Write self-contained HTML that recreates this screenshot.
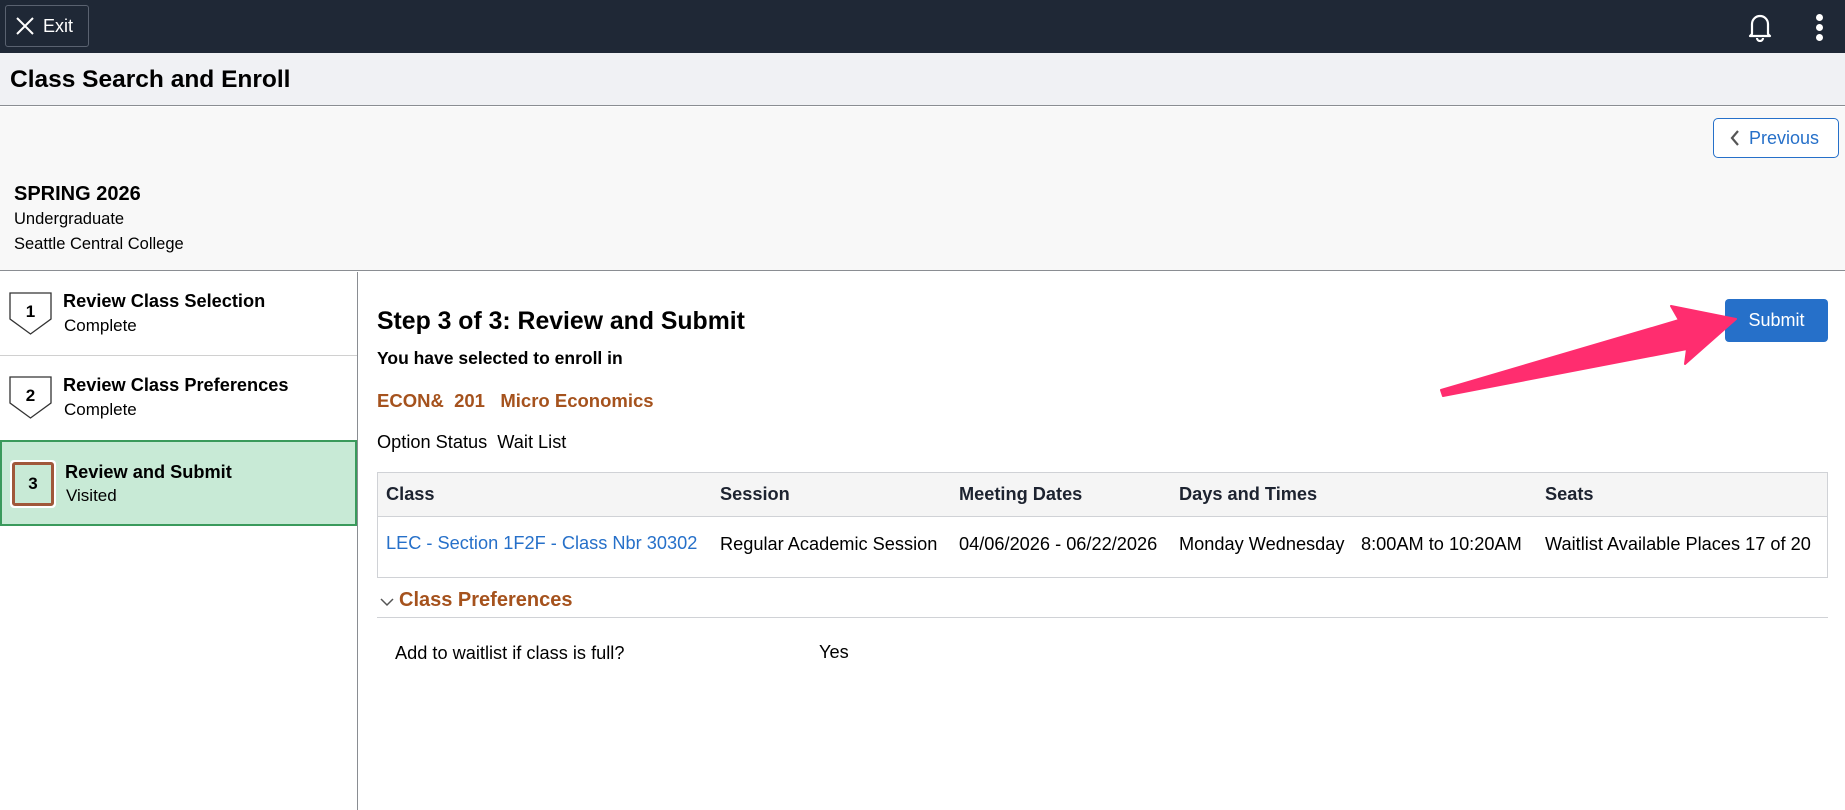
<!DOCTYPE html>
<html><head><meta charset="utf-8"><style>
*{margin:0;padding:0;box-sizing:border-box}
body{width:1845px;height:810px;overflow:hidden;font-family:"Liberation Sans",Arial,sans-serif;background:#fff;color:#000;position:relative}
.a{position:absolute;white-space:nowrap}
.b{font-weight:bold}
</style></head><body>
<div class="a" style="left:0;top:0;width:1845px;height:53px;background:#1f2836"></div>
<div class="a" style="left:5px;top:5px;width:84px;height:42px;border:1px solid #5a6270;border-radius:3px;color:#fff;font-size:18px;line-height:40px;padding-left:37px">Exit</div>
<svg class="a" style="left:15px;top:16px" width="20" height="20" viewBox="0 0 20 20"><path d="M2 2L18 18M18 2L2 18" stroke="#fff" stroke-width="2"/></svg>
<svg class="a" style="left:1747px;top:12px" width="26" height="30" viewBox="0 0 26 30"><path d="M5 22V12a8 8 0 0 1 16 0v10l2 2H3z" fill="none" stroke="#fff" stroke-width="2.2" stroke-linejoin="round"/><path d="M10 26a3 3 0 0 0 6 0" fill="none" stroke="#fff" stroke-width="2.2"/></svg>
<div class="a" style="left:1816px;top:14px;width:7px;height:7px;border-radius:50%;background:#fff"></div>
<div class="a" style="left:1816px;top:24px;width:7px;height:7px;border-radius:50%;background:#fff"></div>
<div class="a" style="left:1816px;top:34px;width:7px;height:7px;border-radius:50%;background:#fff"></div>

<div class="a" style="left:0;top:53px;width:1845px;height:53px;background:#f0f1f4;border-bottom:1px solid #8a8d92"></div>
<div class="a b" style="left:10px;top:66px;font-size:24.5px">Class Search and Enroll</div>
<div class="a" style="left:0;top:107px;width:1845px;height:164px;background:#f8f8f8;border-bottom:1px solid #8a8d92"></div>
<div class="a" style="left:1713px;top:118px;width:126px;height:40px;border:1px solid #2670c9;border-radius:5px;background:#fff;color:#2670c9;font-size:18px;line-height:38px;padding-left:35px">Previous</div>
<svg class="a" style="left:1729px;top:129px" width="12" height="18" viewBox="0 0 12 18"><path d="M9 2L3 9l6 7" fill="none" stroke="#555" stroke-width="2.2"/></svg>
<div class="a b" style="left:14px;top:183px;font-size:20px">SPRING 2026</div>
<div class="a" style="left:14px;top:210px;font-size:16.5px">Undergraduate</div>
<div class="a" style="left:14px;top:235px;font-size:16.5px">Seattle Central College</div>

<div class="a" style="left:357px;top:272px;width:1px;height:538px;background:#8a8d92"></div>
<div class="a" style="left:0;top:355px;width:357px;height:1px;background:#d0d0d0"></div>
<svg class="a" style="left:9px;top:292px" width="44" height="43" viewBox="0 0 44 43"><path d="M1 1H42V27L21.5 42L1 27Z" fill="#fff" stroke="#333" stroke-width="1.3"/><text x="21.5" y="25" font-family="Liberation Sans" font-weight="bold" font-size="17" text-anchor="middle">1</text></svg>
<div class="a b" style="left:63px;top:291px;font-size:18.2px">Review Class Selection</div>
<div class="a" style="left:64px;top:316px;font-size:17px">Complete</div>
<svg class="a" style="left:9px;top:376px" width="44" height="43" viewBox="0 0 44 43"><path d="M1 1H42V27L21.5 42L1 27Z" fill="#fff" stroke="#333" stroke-width="1.3"/><text x="21.5" y="25" font-family="Liberation Sans" font-weight="bold" font-size="17" text-anchor="middle">2</text></svg>
<div class="a b" style="left:63px;top:375px;font-size:18.2px">Review Class Preferences</div>
<div class="a" style="left:64px;top:400px;font-size:17px">Complete</div>
<div class="a" style="left:0;top:440px;width:357px;height:86px;background:#c8ead6;border:2px solid #3a9a5c"></div>
<div class="a" style="left:10px;top:460px;width:46px;height:48px;background:#fff;border-radius:4px"></div>
<div class="a b" style="left:12px;top:462px;width:42px;height:44px;border:3px solid #a0583a;border-radius:3px;background:#c8ead6;font-size:17px;text-align:center;line-height:38px">3</div>
<div class="a b" style="left:65px;top:462px;font-size:18.2px">Review and Submit</div>
<div class="a" style="left:66px;top:486px;font-size:17px">Visited</div>

<div class="a b" style="left:377px;top:308px;font-size:24.8px">Step 3 of 3: Review and Submit</div>
<div class="a b" style="left:377px;top:348px;font-size:17.5px">You have selected to enroll in</div>
<div class="a b" style="left:377px;top:390px;font-size:18.5px;color:#a5521d">ECON&amp;&nbsp; 201&nbsp;&nbsp; Micro Economics</div>
<div class="a" style="left:377px;top:432px;font-size:18.2px">Option Status&nbsp; Wait List</div>

<div class="a" style="left:377px;top:472px;width:1451px;height:106px;border:1px solid #d0d2d6"></div>
<div class="a" style="left:378px;top:473px;width:1449px;height:44px;background:#f5f5f5;border-bottom:1px solid #d0d2d6"></div>
<div class="a b" style="left:386px;top:484px;font-size:18.2px;color:#1d2330">Class</div>
<div class="a b" style="left:720px;top:484px;font-size:18.2px;color:#1d2330">Session</div>
<div class="a b" style="left:959px;top:484px;font-size:18.2px;color:#1d2330">Meeting Dates</div>
<div class="a b" style="left:1179px;top:484px;font-size:18.2px;color:#1d2330">Days and Times</div>
<div class="a b" style="left:1545px;top:484px;font-size:18.2px;color:#1d2330">Seats</div>
<div class="a" style="left:386px;top:533px;font-size:18.2px;color:#2670c9">LEC - Section 1F2F - Class Nbr 30302</div>
<div class="a" style="left:720px;top:534px;font-size:18.2px">Regular Academic Session</div>
<div class="a" style="left:959px;top:534px;font-size:18.2px">04/06/2026 - 06/22/2026</div>
<div class="a" style="left:1179px;top:534px;font-size:18.2px">Monday Wednesday</div>
<div class="a" style="left:1361px;top:534px;font-size:18.2px">8:00AM to 10:20AM</div>
<div class="a" style="left:1545px;top:534px;font-size:18.2px">Waitlist Available Places 17 of 20</div>

<svg class="a" style="left:380px;top:597px" width="14" height="10" viewBox="0 0 14 10"><path d="M1 2l6 6 6-6" fill="none" stroke="#555" stroke-width="1.5"/></svg>
<div class="a b" style="left:399px;top:589px;font-size:20px;color:#a5521d">Class Preferences</div>
<div class="a" style="left:377px;top:617px;width:1451px;height:1px;background:#d0d2d6"></div>
<div class="a" style="left:395px;top:643px;font-size:18.2px">Add to waitlist if class is full?</div>
<div class="a" style="left:819px;top:642px;font-size:18.2px">Yes</div>

<div class="a" style="left:1725px;top:299px;width:103px;height:43px;background:#2670c9;border-radius:4px;color:#fff;font-size:18px;text-align:center;line-height:43px">Submit</div>
<svg class="a" style="left:0;top:0" width="1845" height="810" viewBox="0 0 1845 810"><path d="M1441 390L1679 320L1671 306L1736 319L1685 364L1687 349L1443 396Z" fill="#ff2d6f" stroke="#ff2d6f" stroke-width="2" stroke-linejoin="round"/></svg>
</body></html>
